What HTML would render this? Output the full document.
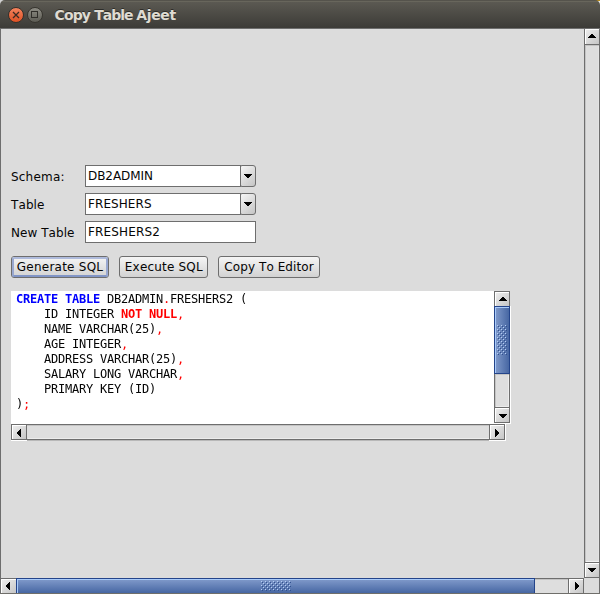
<!DOCTYPE html>
<html>
<head>
<meta charset="utf-8">
<title>Copy Table Ajeet</title>
<style>
html,body{margin:0;padding:0;}
body{width:600px;height:594px;overflow:hidden;background:#dcdcdc;position:relative;font-family:"DejaVu Sans","Liberation Sans",sans-serif;font-size:12px;color:#050505;font-kerning:none;letter-spacing:0.2px;}
.abs{position:absolute;box-sizing:border-box;}
#titlebar{left:0;top:0;width:600px;height:28px;background:linear-gradient(#55534c 0,#55534c 1px,#68665c 1px,#68665c 2px,#5b5952 2px,#3c3b37 28px);border-radius:5px 5px 0 0;}
#corners{left:0;top:0;width:600px;height:10px;background:linear-gradient(90deg,#d2d2d2 0,#d2d2d2 300px,#f4f4f4 300px);}
#corner2{left:590px;top:0;width:10px;height:1px;background:#b58a1e;}
#title{left:54.5px;top:7px;font-family:"DejaVu Sans","Liberation Sans",sans-serif;font-weight:bold;font-size:14px;letter-spacing:-0.65px;line-height:16px;color:#dfdbd2;white-space:nowrap;text-shadow:0 -1px 0 rgba(0,0,0,.45);}
.wbtn{width:16px;height:16px;border-radius:8px;top:6px;}
.lbl{left:11px;white-space:nowrap;line-height:16px;}
.field{background:#fff;border:1px solid #6e6e6e;}
.ftext{white-space:nowrap;line-height:16px;}
.cbtn{border:1px solid #6e6e6e;border-radius:2px 3px 3px 2px;background:linear-gradient(135deg,#f6f6f6,#c4c4c4);}
.btn{border:1px solid #6e6e6e;border-radius:3px;letter-spacing:0.24px;background:linear-gradient(#f5f5f5,#d2d2d2);text-align:center;line-height:20px;white-space:nowrap;}
.focus{border-radius:2px;border:2px solid #9aa9d1;border-top-color:#afbbdc;border-bottom-color:#8195c6;}
pre{margin:0;will-change:transform;font-family:"DejaVu Sans Mono","Liberation Mono",monospace;font-size:12px;line-height:15px;letter-spacing:-0.2246px;}
.kw{color:#0000ff;font-weight:bold;}
.red{color:#ff0000;}
.rb{color:#ff0000;font-weight:bold;}
</style>
</head>
<body>
<div id="corners" class="abs"></div>
<div id="corner2" class="abs"></div>
<div id="titlebar" class="abs"></div>
<div class="abs wbtn" style="left:7.6px;top:6.5px;background:linear-gradient(#f5835d,#de5124);border:1px solid #37302a;"></div>
<svg class="abs" style="left:7.6px;top:6.5px" width="16" height="16" viewBox="0 0 16 16"><path d="M5 5 L11 11 M11 5 L5 11" stroke="#3b2a22" stroke-width="1.25" fill="none"/></svg>
<div class="abs wbtn" style="left:26.5px;top:6.5px;background:linear-gradient(#8d8c84,#5c5b54);border:1px solid #37352f;"></div>
<svg class="abs" style="left:26px;top:6px" width="16" height="16" viewBox="0 0 16 16" shape-rendering="crispEdges"><rect x="5.5" y="5.5" width="6" height="6" stroke="#302e2a" stroke-width="1" fill="none"/></svg>
<div id="title" class="abs"><span style="letter-spacing:-0.85px">Copy </span><span style="letter-spacing:-1px">Table </span><span style="letter-spacing:-0.39px">Ajeet</span></div>

<div class="abs lbl" style="top:169px">Schema:</div>
<div class="abs lbl" style="top:197px;letter-spacing:0.1px">Table</div>
<div class="abs lbl" style="top:225px;letter-spacing:0.055px">New Table</div>

<div class="abs field" style="left:85px;top:165px;width:156px;height:22px"></div>
<div class="abs cbtn" style="left:240px;top:165px;width:16px;height:22px"></div>
<div class="abs ftext" style="left:88px;top:168px;letter-spacing:-0.06px">DB2ADMIN</div>
<div class="abs field" style="left:85px;top:193px;width:156px;height:22px"></div>
<div class="abs cbtn" style="left:240px;top:193px;width:16px;height:22px"></div>
<div class="abs ftext" style="left:88px;top:196px;letter-spacing:0.075px">FRESHERS</div>
<div class="abs field" style="left:85px;top:221px;width:171px;height:22px"></div>
<div class="abs ftext" style="left:88px;top:224px;letter-spacing:0.17px">FRESHERS2</div>

<div class="abs btn" style="left:11px;top:256px;width:98px;height:22px">Generate SQL</div>
<div class="abs focus" style="left:12px;top:257px;width:96px;height:20px"></div>
<div class="abs btn" style="left:119px;top:256px;width:89px;height:22px;letter-spacing:0.18px;text-indent:0.6px">Execute SQL</div>
<div class="abs btn" style="left:218px;top:256px;width:102px;height:22px;letter-spacing:0.08px">Copy To Editor</div>

<div class="abs" style="left:11px;top:291px;width:483px;height:133px;background:#fff;"></div>
<pre class="abs" style="left:16px;top:292px"><span class="kw">CREATE TABLE</span> DB2ADMIN<span class="red">.</span>FRESHERS2 (
    ID INTEGER <span class="rb">NOT NULL</span><span class="red">,</span>
    NAME VARCHAR(25)<span class="red">,</span>
    AGE INTEGER<span class="red">,</span>
    ADDRESS VARCHAR(25)<span class="red">,</span>
    SALARY LONG VARCHAR<span class="red">,</span>
    PRIMARY KEY (ID)
)<span class="red">;</span></pre>
<svg class="abs" style="left:0;top:0" width="600" height="594" viewBox="0 0 600 594" shape-rendering="crispEdges">
<defs>
<linearGradient id="bg" x1="0" y1="0" x2="1" y2="1"><stop offset="0" stop-color="#ececec"/><stop offset="1" stop-color="#c6c6c6"/></linearGradient>
<linearGradient id="vth" x1="0" y1="0" x2="1" y2="0"><stop offset="0" stop-color="#7d97c8"/><stop offset="1" stop-color="#4767a3"/></linearGradient>
<linearGradient id="hth" x1="0" y1="0" x2="0" y2="1"><stop offset="0" stop-color="#7d97c8"/><stop offset="1" stop-color="#4767a3"/></linearGradient>
</defs>
<rect x="494" y="306" width="17" height="118" fill="#ffffff"/>
<rect x="494" y="291" width="16" height="132" fill="#6e6e6e"/>
<rect x="495" y="307" width="14" height="100" fill="#dedede"/>
<rect x="495" y="307" width="1" height="100" fill="#c4c4c4"/>
<rect x="495" y="374" width="14" height="1" fill="#c4c4c4"/>
<rect x="508" y="375" width="1" height="32" fill="#ececec"/>
<rect x="496" y="406" width="13" height="1" fill="#ececec"/>
<rect x="494" y="291" width="16" height="16" fill="#6e6e6e"/><rect x="495" y="292" width="14" height="14" fill="#ffffff"/><rect x="496" y="293" width="13" height="13" fill="url(#bg)"/>
<rect x="502" y="297" width="2" height="1" fill="#000"/><rect x="501" y="298" width="4" height="1" fill="#000"/><rect x="500" y="299" width="6" height="1" fill="#000"/><rect x="499" y="300" width="8" height="1" fill="#000"/>
<rect x="494" y="407" width="16" height="16" fill="#6e6e6e"/><rect x="495" y="408" width="14" height="14" fill="#ffffff"/><rect x="496" y="409" width="13" height="13" fill="url(#bg)"/>
<rect x="499" y="414" width="8" height="1" fill="#000"/><rect x="500" y="415" width="6" height="1" fill="#000"/><rect x="501" y="416" width="4" height="1" fill="#000"/><rect x="502" y="417" width="2" height="1" fill="#000"/>
<rect x="494" y="306" width="16" height="68" fill="#24448a"/>
<rect x="495" y="307" width="14" height="66" fill="#a9cbfa"/>
<rect x="496" y="308" width="13" height="65" fill="url(#vth)"/>
<rect x="497" y="325" width="1" height="1" fill="#b4cdf5"/><rect x="498" y="326" width="1" height="1" fill="#30508f"/><rect x="501" y="325" width="1" height="1" fill="#b4cdf5"/><rect x="502" y="326" width="1" height="1" fill="#30508f"/><rect x="505" y="325" width="1" height="1" fill="#b4cdf5"/><rect x="506" y="326" width="1" height="1" fill="#30508f"/><rect x="499" y="327" width="1" height="1" fill="#b4cdf5"/><rect x="500" y="328" width="1" height="1" fill="#30508f"/><rect x="503" y="327" width="1" height="1" fill="#b4cdf5"/><rect x="504" y="328" width="1" height="1" fill="#30508f"/><rect x="497" y="329" width="1" height="1" fill="#b4cdf5"/><rect x="498" y="330" width="1" height="1" fill="#30508f"/><rect x="501" y="329" width="1" height="1" fill="#b4cdf5"/><rect x="502" y="330" width="1" height="1" fill="#30508f"/><rect x="505" y="329" width="1" height="1" fill="#b4cdf5"/><rect x="506" y="330" width="1" height="1" fill="#30508f"/><rect x="499" y="331" width="1" height="1" fill="#b4cdf5"/><rect x="500" y="332" width="1" height="1" fill="#30508f"/><rect x="503" y="331" width="1" height="1" fill="#b4cdf5"/><rect x="504" y="332" width="1" height="1" fill="#30508f"/><rect x="497" y="333" width="1" height="1" fill="#b4cdf5"/><rect x="498" y="334" width="1" height="1" fill="#30508f"/><rect x="501" y="333" width="1" height="1" fill="#b4cdf5"/><rect x="502" y="334" width="1" height="1" fill="#30508f"/><rect x="505" y="333" width="1" height="1" fill="#b4cdf5"/><rect x="506" y="334" width="1" height="1" fill="#30508f"/><rect x="499" y="335" width="1" height="1" fill="#b4cdf5"/><rect x="500" y="336" width="1" height="1" fill="#30508f"/><rect x="503" y="335" width="1" height="1" fill="#b4cdf5"/><rect x="504" y="336" width="1" height="1" fill="#30508f"/><rect x="497" y="337" width="1" height="1" fill="#b4cdf5"/><rect x="498" y="338" width="1" height="1" fill="#30508f"/><rect x="501" y="337" width="1" height="1" fill="#b4cdf5"/><rect x="502" y="338" width="1" height="1" fill="#30508f"/><rect x="505" y="337" width="1" height="1" fill="#b4cdf5"/><rect x="506" y="338" width="1" height="1" fill="#30508f"/><rect x="499" y="339" width="1" height="1" fill="#b4cdf5"/><rect x="500" y="340" width="1" height="1" fill="#30508f"/><rect x="503" y="339" width="1" height="1" fill="#b4cdf5"/><rect x="504" y="340" width="1" height="1" fill="#30508f"/><rect x="497" y="341" width="1" height="1" fill="#b4cdf5"/><rect x="498" y="342" width="1" height="1" fill="#30508f"/><rect x="501" y="341" width="1" height="1" fill="#b4cdf5"/><rect x="502" y="342" width="1" height="1" fill="#30508f"/><rect x="505" y="341" width="1" height="1" fill="#b4cdf5"/><rect x="506" y="342" width="1" height="1" fill="#30508f"/><rect x="499" y="343" width="1" height="1" fill="#b4cdf5"/><rect x="500" y="344" width="1" height="1" fill="#30508f"/><rect x="503" y="343" width="1" height="1" fill="#b4cdf5"/><rect x="504" y="344" width="1" height="1" fill="#30508f"/><rect x="497" y="345" width="1" height="1" fill="#b4cdf5"/><rect x="498" y="346" width="1" height="1" fill="#30508f"/><rect x="501" y="345" width="1" height="1" fill="#b4cdf5"/><rect x="502" y="346" width="1" height="1" fill="#30508f"/><rect x="505" y="345" width="1" height="1" fill="#b4cdf5"/><rect x="506" y="346" width="1" height="1" fill="#30508f"/><rect x="499" y="347" width="1" height="1" fill="#b4cdf5"/><rect x="500" y="348" width="1" height="1" fill="#30508f"/><rect x="503" y="347" width="1" height="1" fill="#b4cdf5"/><rect x="504" y="348" width="1" height="1" fill="#30508f"/><rect x="497" y="349" width="1" height="1" fill="#b4cdf5"/><rect x="498" y="350" width="1" height="1" fill="#30508f"/><rect x="501" y="349" width="1" height="1" fill="#b4cdf5"/><rect x="502" y="350" width="1" height="1" fill="#30508f"/><rect x="505" y="349" width="1" height="1" fill="#b4cdf5"/><rect x="506" y="350" width="1" height="1" fill="#30508f"/><rect x="499" y="351" width="1" height="1" fill="#b4cdf5"/><rect x="500" y="352" width="1" height="1" fill="#30508f"/><rect x="503" y="351" width="1" height="1" fill="#b4cdf5"/><rect x="504" y="352" width="1" height="1" fill="#30508f"/><rect x="497" y="353" width="1" height="1" fill="#b4cdf5"/><rect x="498" y="354" width="1" height="1" fill="#30508f"/><rect x="501" y="353" width="1" height="1" fill="#b4cdf5"/><rect x="502" y="354" width="1" height="1" fill="#30508f"/><rect x="505" y="353" width="1" height="1" fill="#b4cdf5"/><rect x="506" y="354" width="1" height="1" fill="#30508f"/>
<rect x="11" y="424" width="495" height="17" fill="#ffffff"/>
<rect x="27" y="440" width="462" height="1" fill="#b8b8b8"/>
<rect x="11" y="424" width="494" height="16" fill="#6e6e6e"/>
<rect x="27" y="425" width="462" height="14" fill="#dedede"/>
<rect x="27" y="425" width="462" height="1" fill="#c4c4c4"/>
<rect x="28" y="438" width="461" height="1" fill="#ececec"/>
<rect x="11" y="424" width="16" height="16" fill="#6e6e6e"/><rect x="12" y="425" width="14" height="14" fill="#ffffff"/><rect x="13" y="426" width="13" height="13" fill="url(#bg)"/>
<rect x="17" y="432" width="1" height="2" fill="#000"/><rect x="18" y="431" width="1" height="4" fill="#000"/><rect x="19" y="430" width="1" height="6" fill="#000"/><rect x="20" y="429" width="1" height="8" fill="#000"/>
<rect x="489" y="424" width="16" height="16" fill="#6e6e6e"/><rect x="490" y="425" width="14" height="14" fill="#ffffff"/><rect x="491" y="426" width="13" height="13" fill="url(#bg)"/>
<rect x="495" y="429" width="1" height="8" fill="#000"/><rect x="496" y="430" width="1" height="6" fill="#000"/><rect x="497" y="431" width="1" height="4" fill="#000"/><rect x="498" y="432" width="1" height="2" fill="#000"/>
<rect x="0" y="28" width="600" height="1" fill="#6e6e6e"/>
<rect x="0" y="28" width="1" height="566" fill="#6e6e6e"/>
<rect x="599" y="28" width="1" height="566" fill="#6e6e6e"/>
<rect x="0" y="593" width="600" height="1" fill="#6e6e6e"/>
<rect x="584" y="28" width="16" height="550" fill="#6e6e6e"/>
<rect x="585" y="45" width="14" height="517" fill="#dedede"/>
<rect x="585" y="45" width="1" height="517" fill="#c4c4c4"/>
<rect x="585" y="45" width="14" height="1" fill="#c4c4c4"/>
<rect x="598" y="46" width="1" height="516" fill="#e4e4e4"/>
<rect x="586" y="561" width="13" height="1" fill="#f2f2f2"/>
<rect x="584" y="28" width="16" height="17" fill="#6e6e6e"/><rect x="585" y="29" width="14" height="15" fill="#ffffff"/><rect x="586" y="30" width="13" height="14" fill="url(#bg)"/>
<rect x="591" y="34" width="2" height="1" fill="#000"/><rect x="590" y="35" width="4" height="1" fill="#000"/><rect x="589" y="36" width="6" height="1" fill="#000"/><rect x="588" y="37" width="8" height="1" fill="#000"/>
<rect x="584" y="562" width="16" height="16" fill="#6e6e6e"/><rect x="585" y="563" width="14" height="14" fill="#ffffff"/><rect x="586" y="564" width="13" height="13" fill="url(#bg)"/>
<rect x="588" y="568" width="8" height="1" fill="#000"/><rect x="589" y="569" width="6" height="1" fill="#000"/><rect x="590" y="570" width="4" height="1" fill="#000"/><rect x="591" y="571" width="2" height="1" fill="#000"/>
<rect x="0" y="578" width="584" height="16" fill="#6e6e6e"/>
<rect x="1" y="579" width="567" height="14" fill="#dedede"/>
<rect x="1" y="579" width="567" height="1" fill="#c4c4c4"/>
<rect x="0" y="578" width="17" height="16" fill="#6e6e6e"/><rect x="1" y="579" width="15" height="14" fill="#ffffff"/><rect x="2" y="580" width="14" height="13" fill="url(#bg)"/>
<rect x="6" y="585" width="1" height="2" fill="#000"/><rect x="7" y="584" width="1" height="4" fill="#000"/><rect x="8" y="583" width="1" height="6" fill="#000"/><rect x="9" y="582" width="1" height="8" fill="#000"/>
<rect x="568" y="578" width="16" height="16" fill="#6e6e6e"/><rect x="569" y="579" width="14" height="14" fill="#ffffff"/><rect x="570" y="580" width="13" height="13" fill="url(#bg)"/>
<rect x="575" y="582" width="1" height="8" fill="#000"/><rect x="576" y="583" width="1" height="6" fill="#000"/><rect x="577" y="584" width="1" height="4" fill="#000"/><rect x="578" y="585" width="1" height="2" fill="#000"/>
<rect x="16" y="578" width="519" height="16" fill="#24448a"/>
<rect x="17" y="579" width="517" height="14" fill="#a9cbfa"/>
<rect x="18" y="580" width="516" height="13" fill="url(#hth)"/>
<rect x="261" y="581" width="1" height="1" fill="#b4cdf5"/><rect x="262" y="582" width="1" height="1" fill="#30508f"/><rect x="265" y="581" width="1" height="1" fill="#b4cdf5"/><rect x="266" y="582" width="1" height="1" fill="#30508f"/><rect x="269" y="581" width="1" height="1" fill="#b4cdf5"/><rect x="270" y="582" width="1" height="1" fill="#30508f"/><rect x="273" y="581" width="1" height="1" fill="#b4cdf5"/><rect x="274" y="582" width="1" height="1" fill="#30508f"/><rect x="277" y="581" width="1" height="1" fill="#b4cdf5"/><rect x="278" y="582" width="1" height="1" fill="#30508f"/><rect x="281" y="581" width="1" height="1" fill="#b4cdf5"/><rect x="282" y="582" width="1" height="1" fill="#30508f"/><rect x="285" y="581" width="1" height="1" fill="#b4cdf5"/><rect x="286" y="582" width="1" height="1" fill="#30508f"/><rect x="289" y="581" width="1" height="1" fill="#b4cdf5"/><rect x="290" y="582" width="1" height="1" fill="#30508f"/><rect x="263" y="583" width="1" height="1" fill="#b4cdf5"/><rect x="264" y="584" width="1" height="1" fill="#30508f"/><rect x="267" y="583" width="1" height="1" fill="#b4cdf5"/><rect x="268" y="584" width="1" height="1" fill="#30508f"/><rect x="271" y="583" width="1" height="1" fill="#b4cdf5"/><rect x="272" y="584" width="1" height="1" fill="#30508f"/><rect x="275" y="583" width="1" height="1" fill="#b4cdf5"/><rect x="276" y="584" width="1" height="1" fill="#30508f"/><rect x="279" y="583" width="1" height="1" fill="#b4cdf5"/><rect x="280" y="584" width="1" height="1" fill="#30508f"/><rect x="283" y="583" width="1" height="1" fill="#b4cdf5"/><rect x="284" y="584" width="1" height="1" fill="#30508f"/><rect x="287" y="583" width="1" height="1" fill="#b4cdf5"/><rect x="288" y="584" width="1" height="1" fill="#30508f"/><rect x="261" y="585" width="1" height="1" fill="#b4cdf5"/><rect x="262" y="586" width="1" height="1" fill="#30508f"/><rect x="265" y="585" width="1" height="1" fill="#b4cdf5"/><rect x="266" y="586" width="1" height="1" fill="#30508f"/><rect x="269" y="585" width="1" height="1" fill="#b4cdf5"/><rect x="270" y="586" width="1" height="1" fill="#30508f"/><rect x="273" y="585" width="1" height="1" fill="#b4cdf5"/><rect x="274" y="586" width="1" height="1" fill="#30508f"/><rect x="277" y="585" width="1" height="1" fill="#b4cdf5"/><rect x="278" y="586" width="1" height="1" fill="#30508f"/><rect x="281" y="585" width="1" height="1" fill="#b4cdf5"/><rect x="282" y="586" width="1" height="1" fill="#30508f"/><rect x="285" y="585" width="1" height="1" fill="#b4cdf5"/><rect x="286" y="586" width="1" height="1" fill="#30508f"/><rect x="289" y="585" width="1" height="1" fill="#b4cdf5"/><rect x="290" y="586" width="1" height="1" fill="#30508f"/><rect x="263" y="587" width="1" height="1" fill="#b4cdf5"/><rect x="264" y="588" width="1" height="1" fill="#30508f"/><rect x="267" y="587" width="1" height="1" fill="#b4cdf5"/><rect x="268" y="588" width="1" height="1" fill="#30508f"/><rect x="271" y="587" width="1" height="1" fill="#b4cdf5"/><rect x="272" y="588" width="1" height="1" fill="#30508f"/><rect x="275" y="587" width="1" height="1" fill="#b4cdf5"/><rect x="276" y="588" width="1" height="1" fill="#30508f"/><rect x="279" y="587" width="1" height="1" fill="#b4cdf5"/><rect x="280" y="588" width="1" height="1" fill="#30508f"/><rect x="283" y="587" width="1" height="1" fill="#b4cdf5"/><rect x="284" y="588" width="1" height="1" fill="#30508f"/><rect x="287" y="587" width="1" height="1" fill="#b4cdf5"/><rect x="288" y="588" width="1" height="1" fill="#30508f"/><rect x="261" y="589" width="1" height="1" fill="#b4cdf5"/><rect x="262" y="590" width="1" height="1" fill="#30508f"/><rect x="265" y="589" width="1" height="1" fill="#b4cdf5"/><rect x="266" y="590" width="1" height="1" fill="#30508f"/><rect x="269" y="589" width="1" height="1" fill="#b4cdf5"/><rect x="270" y="590" width="1" height="1" fill="#30508f"/><rect x="273" y="589" width="1" height="1" fill="#b4cdf5"/><rect x="274" y="590" width="1" height="1" fill="#30508f"/><rect x="277" y="589" width="1" height="1" fill="#b4cdf5"/><rect x="278" y="590" width="1" height="1" fill="#30508f"/><rect x="281" y="589" width="1" height="1" fill="#b4cdf5"/><rect x="282" y="590" width="1" height="1" fill="#30508f"/><rect x="285" y="589" width="1" height="1" fill="#b4cdf5"/><rect x="286" y="590" width="1" height="1" fill="#30508f"/><rect x="289" y="589" width="1" height="1" fill="#b4cdf5"/><rect x="290" y="590" width="1" height="1" fill="#30508f"/>
<rect x="0" y="593" width="600" height="1" fill="#6f6e6a"/>
</svg>
<svg class="abs" style="left:0;top:0" width="600" height="594" viewBox="0 0 600 594" shape-rendering="crispEdges">
<rect x="244" y="174" width="8" height="1" fill="#000"/><rect x="245" y="175" width="6" height="1" fill="#000"/><rect x="246" y="176" width="4" height="1" fill="#000"/><rect x="247" y="177" width="2" height="1" fill="#000"/>
<rect x="244" y="202" width="8" height="1" fill="#000"/><rect x="245" y="203" width="6" height="1" fill="#000"/><rect x="246" y="204" width="4" height="1" fill="#000"/><rect x="247" y="205" width="2" height="1" fill="#000"/>
</svg>
</body>
</html>
